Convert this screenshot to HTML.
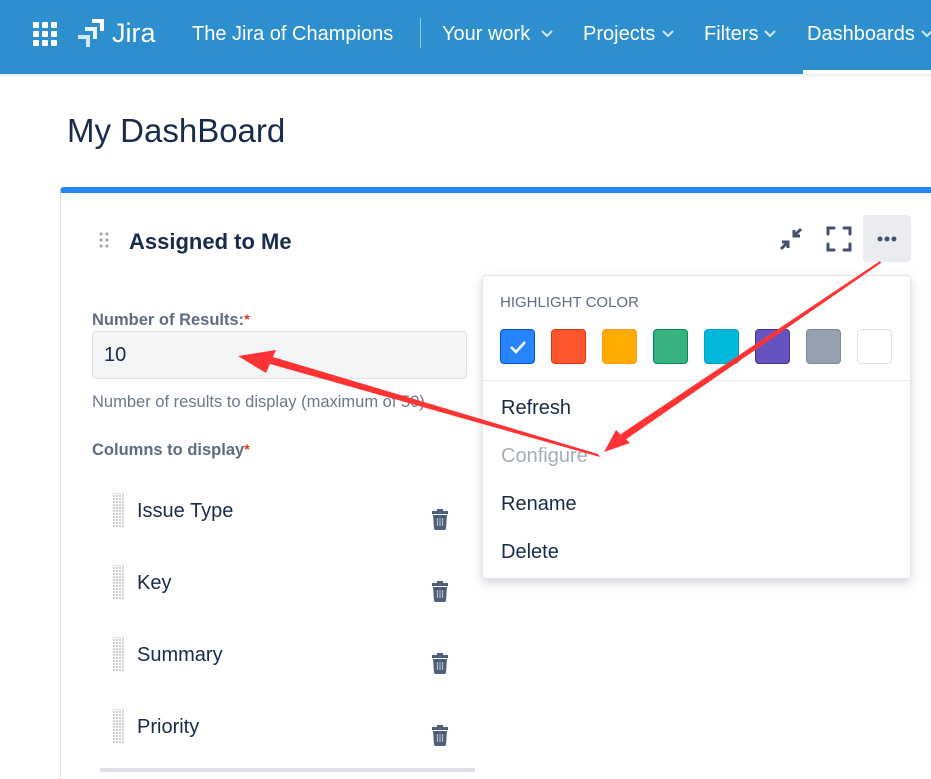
<!DOCTYPE html>
<html style="width:931px;height:779px;overflow:hidden"><head><meta charset="utf-8"><style>
*{margin:0;padding:0;box-sizing:border-box}
body{width:931px;height:779px;overflow:hidden;background:#fff;font-family:"Liberation Sans",sans-serif;position:relative;color:#172b4d}
.nav{position:absolute;left:0;top:0;width:931px;height:74px;background:#2d8fce;color:#fff}
.nav span{position:absolute;top:23px;font-size:20px;white-space:nowrap}
.nav svg.ch{position:absolute;top:30px}
.abs{position:absolute}
.sw{position:absolute;top:329px;width:35px;height:35px;border-radius:4px}
.mi{position:absolute;left:501px;font-size:20px;color:#172b4d}
.row{position:absolute;left:137px;font-size:20px;color:#172b4d}
.grip{position:absolute;left:113px;width:12px;height:34px;background:repeating-linear-gradient(0deg,#ccc 0 2px,transparent 2px 3px),#fff;opacity:.9}
.grip::after{content:"";position:absolute;inset:0;background:repeating-linear-gradient(90deg,transparent 0 2px,#fff 2px 3px)}
.trash{position:absolute;left:431px}
</style></head><body>
<div class="nav">
 <svg class="abs" style="left:33px;top:22px" width="24" height="24" viewBox="0 0 24 24" fill="#fff">
  <rect x="0" y="0" width="6" height="6" rx="1"/><rect x="9" y="0" width="6" height="6" rx="1"/><rect x="18" y="0" width="6" height="6" rx="1"/>
  <rect x="0" y="9" width="6" height="6" rx="1"/><rect x="9" y="9" width="6" height="6" rx="1"/><rect x="18" y="9" width="6" height="6" rx="1"/>
  <rect x="0" y="18" width="6" height="6" rx="1"/><rect x="9" y="18" width="6" height="6" rx="1"/><rect x="18" y="18" width="6" height="6" rx="1"/>
 </svg>
 <svg class="abs" style="left:78px;top:19px" width="28" height="28" viewBox="0 0 28 28" fill="#fff">
  <path d="M14 0h12v12h-4V4h-8z"/><path d="M7 8h12v12h-4v-8H7z" opacity=".9"/><path d="M0 16h12v12H8v-8H0z" opacity=".8"/>
 </svg>
 <span style="left:112px;top:18px;font-size:27px">Jira</span>
 <span style="left:192px">The Jira of Champions</span>
 <div class="abs" style="left:420px;top:18px;width:1px;height:30px;background:rgba(255,255,255,.5)"></div>
 <span style="left:442px">Your work</span>
 <svg class="ch" style="left:541px" width="12" height="8"><path d="M1 1l5 5 5-5" stroke="#fff" stroke-width="2" fill="none" opacity=".8"/></svg>
 <span style="left:583px">Projects</span>
 <svg class="ch" style="left:662px" width="12" height="8"><path d="M1 1l5 5 5-5" stroke="#fff" stroke-width="2" fill="none" opacity=".8"/></svg>
 <span style="left:704px">Filters</span>
 <svg class="ch" style="left:764px" width="12" height="8"><path d="M1 1l5 5 5-5" stroke="#fff" stroke-width="2" fill="none" opacity=".8"/></svg>
 <span style="left:807px">Dashboards</span>
 <svg class="ch" style="left:921px" width="12" height="8"><path d="M1 1l5 5 5-5" stroke="#fff" stroke-width="2" fill="none" opacity=".8"/></svg>
 <div class="abs" style="left:803px;top:70px;width:128px;height:4px;background:#fff"></div>
</div>
<div class="abs" style="left:0;top:74px;width:931px;height:4px;background:linear-gradient(#e6e8ec,#fff)"></div>
<div class="abs" style="left:67px;top:112px;font-size:33px;color:#172b4d">My DashBoard</div>
<div class="abs" style="left:60px;top:187px;width:871px;height:592px;border-left:1px solid #dfe1e6;border-top:6px solid #2684ff;border-radius:4px 0 0 0"></div>
<svg class="abs" style="left:99px;top:232px" width="10" height="16" fill="#97a0af"><circle cx="2" cy="2" r="1.5"/><circle cx="8" cy="2" r="1.5"/><circle cx="2" cy="8" r="1.5"/><circle cx="8" cy="8" r="1.5"/><circle cx="2" cy="14" r="1.5"/><circle cx="8" cy="14" r="1.5"/></svg>
<div class="abs" style="left:129px;top:229px;font-size:22px;font-weight:bold">Assigned to Me</div>
<svg class="abs" style="left:778px;top:226px" width="26" height="26" viewBox="0 0 26 26" stroke="#42526e" stroke-width="3" fill="none"><path d="M23 3l-7 7M16 4v6h6M3 23l7-7M4 16h6v6"/></svg>
<svg class="abs" style="left:826px;top:226px" width="26" height="26" viewBox="0 0 26 26" stroke="#42526e" stroke-width="3" fill="none" stroke-linecap="round"><path d="M2 8V2h6M18 2h6v6M24 18v6h-6M8 24H2v-6"/></svg>
<div class="abs" style="left:863px;top:215px;width:48px;height:47px;background:#ebecf0;border-radius:4px"></div>
<svg class="abs" style="left:877px;top:236px" width="20" height="6" fill="#42526e"><circle cx="3" cy="3" r="2.5"/><circle cx="10" cy="3" r="2.5"/><circle cx="17" cy="3" r="2.5"/></svg>
<div class="abs" style="left:92px;top:311px;font-size:16.5px;font-weight:bold;color:#5e6c84">Number of Results:<span style="color:#de350b;font-size:14px;vertical-align:top">*</span></div>
<div class="abs" style="left:92px;top:331px;width:375px;height:48px;background:#f4f5f7;border:1px solid #dfe1e6;border-radius:4px;font-size:20px;padding:12px 11px;line-height:22px">10</div>
<div class="abs" style="left:92px;top:393px;font-size:16.5px;color:#6b778c">Number of results to display (maximum of 50).</div>
<div class="abs" style="left:92px;top:441px;font-size:16.5px;font-weight:bold;color:#5e6c84">Columns to display<span style="color:#de350b;font-size:14px;vertical-align:top">*</span></div>
<div class="grip" style="top:493px"></div><div class="row" style="top:500px">Issue Type</div>
<div class="grip" style="top:565px"></div><div class="row" style="top:572px">Key</div>
<div class="grip" style="top:637px"></div><div class="row" style="top:644px">Summary</div>
<div class="grip" style="top:709px"></div><div class="row" style="top:716px">Priority</div>
<svg class="trash" style="top:508px" width="18" height="22" viewBox="0 0 18 22"><path d="M6 1h6v2h5v3H1V3h5z M2 7h14l-1 13a2 2 0 0 1-2 2H5a2 2 0 0 1-2-2z" fill="#505f79"/><path d="M6.5 10v8M9 10v8M11.5 10v8" stroke="#bcc3d0" stroke-width="1"/></svg>
<svg class="trash" style="top:580px" width="18" height="22" viewBox="0 0 18 22"><path d="M6 1h6v2h5v3H1V3h5z M2 7h14l-1 13a2 2 0 0 1-2 2H5a2 2 0 0 1-2-2z" fill="#505f79"/><path d="M6.5 10v8M9 10v8M11.5 10v8" stroke="#bcc3d0" stroke-width="1"/></svg>
<svg class="trash" style="top:652px" width="18" height="22" viewBox="0 0 18 22"><path d="M6 1h6v2h5v3H1V3h5z M2 7h14l-1 13a2 2 0 0 1-2 2H5a2 2 0 0 1-2-2z" fill="#505f79"/><path d="M6.5 10v8M9 10v8M11.5 10v8" stroke="#bcc3d0" stroke-width="1"/></svg>
<svg class="trash" style="top:724px" width="18" height="22" viewBox="0 0 18 22"><path d="M6 1h6v2h5v3H1V3h5z M2 7h14l-1 13a2 2 0 0 1-2 2H5a2 2 0 0 1-2-2z" fill="#505f79"/><path d="M6.5 10v8M9 10v8M11.5 10v8" stroke="#bcc3d0" stroke-width="1"/></svg>
<div class="abs" style="left:100px;top:768px;width:375px;height:4px;background:#dfe1e6"></div>

<div class="abs" style="left:482px;top:275px;width:429px;height:304px;background:#fff;border:1px solid #e4e6ea;border-radius:4px;box-shadow:0 4px 10px rgba(9,30,66,.18)"></div>
<div class="abs" style="left:500px;top:294px;font-size:15px;color:#5e6c84">HIGHLIGHT COLOR</div>
<div class="sw" style="left:500px;background:#2684ff;border:1px solid #0052cc"><svg width="33" height="33"><path d="M10 17l5 5 9-10" stroke="#fff" stroke-width="2.5" fill="none"/></svg></div>
<div class="sw" style="left:551px;background:#ff5630;border:1px solid #de350b"></div>
<div class="sw" style="left:602px;background:#ffab00;border:1px solid #ff991f"></div>
<div class="sw" style="left:653px;background:#36b37e;border:1px solid #00875a"></div>
<div class="sw" style="left:704px;background:#00b8d9;border:1px solid #00a3bf"></div>
<div class="sw" style="left:755px;background:#6554c0;border:1px solid #403294"></div>
<div class="sw" style="left:806px;background:#97a0af;border:1px solid #7a869a"></div>
<div class="sw" style="left:857px;background:#fff;border:1px solid #dfe1e6"></div>
<div class="abs" style="left:483px;top:380px;width:427px;height:1px;background:#ebecf0"></div>
<div class="mi" style="top:397px">Refresh</div>
<div class="mi" style="top:445px;color:#a5adba">Configure</div>
<div class="mi" style="top:493px">Rename</div>
<div class="mi" style="top:541px">Delete</div>

<svg class="abs" style="left:0;top:0" width="931" height="779">
 <polygon points="880,261 881,263 625,440 621,434" fill="#f33"/>
 <polygon points="604,452 616,430 630,443" fill="#f33"/>
 <polygon points="598,454 600,457 270,364 273,357" fill="#f33"/>
 <polygon points="238,356 276,350 266,373" fill="#f33"/>
</svg>
</body></html>
